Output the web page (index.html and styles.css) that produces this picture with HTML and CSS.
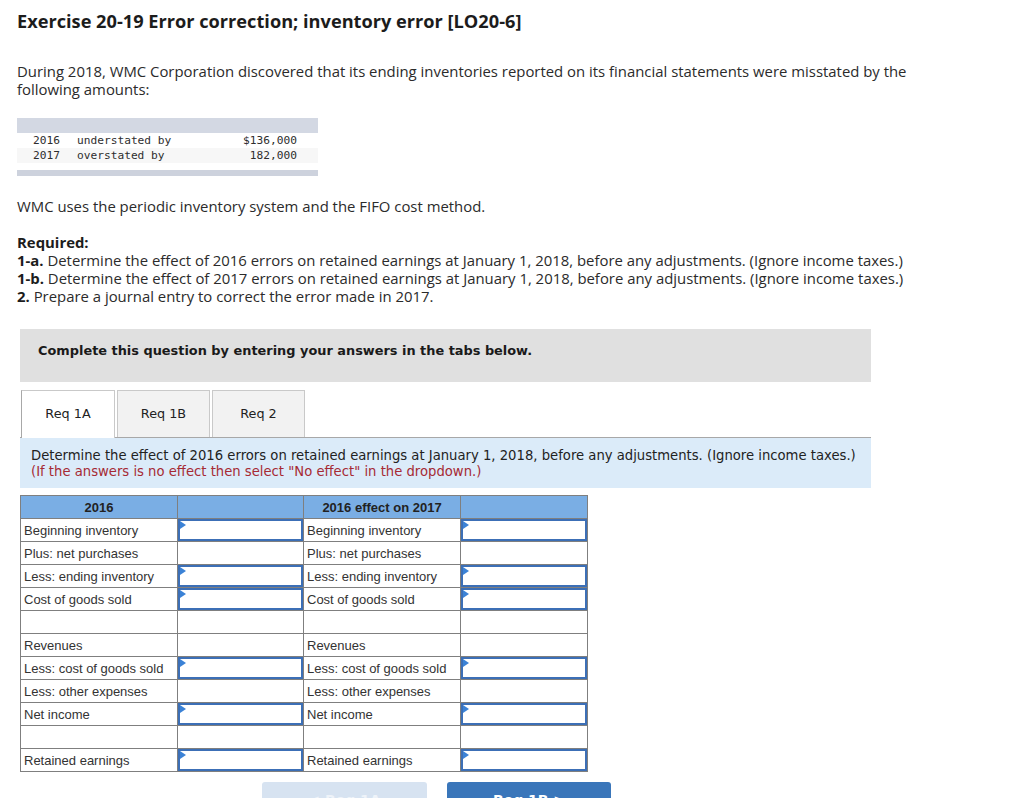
FILE: index.html
```html
<!DOCTYPE html>
<html lang="en">
<head>
<meta charset="utf-8">
<title>Exercise 20-19</title>
<link rel="stylesheet" href="styles.css">
</head>
<body>
<div class="page">
  <h1 class="title">Exercise 20-19 Error correction; inventory error [LO20-6]</h1>

  <p class="text intro">During 2018, WMC Corporation discovered that its ending inventories reported on its financial statements were misstated by the following amounts:</p>

  <div class="data">
    <div class="data-bar"></div>
    <div class="data-row"><span class="yr">2016</span><span class="desc">understated by</span><span class="amt">$136,000</span></div>
    <div class="data-row alt"><span class="yr">2017</span><span class="desc">overstated by</span><span class="amt">182,000</span></div>
    <div class="data-bar bottom"></div>
  </div>

  <p class="text method">WMC uses the periodic inventory system and the FIFO cost method.</p>

  <div class="text required">
    <div><b>Required:</b></div>
    <div><b>1-a.</b> Determine the effect of 2016 errors on retained earnings at January 1, 2018, before any adjustments. (Ignore income taxes.)</div>
    <div><b>1-b.</b> Determine the effect of 2017 errors on retained earnings at January 1, 2018, before any adjustments. (Ignore income taxes.)</div>
    <div><b>2.</b> Prepare a journal entry to correct the error made in 2017.</div>
  </div>

  <div class="panel">
    <div class="notice">Complete this question by entering your answers in the tabs below.</div>

    <div class="tabs">
      <div class="tab active">Req 1A</div>
      <div class="tab">Req 1B</div>
      <div class="tab">Req 2</div>
    </div>

    <div class="info">
      <div>Determine the effect of 2016 errors on retained earnings at January 1, 2018, before any adjustments. (Ignore income taxes.)</div>
      <div class="hint">(If the answers is no effect then select "No effect" in the dropdown.)</div>
    </div>

    <table class="sheet">
      <colgroup>
        <col class="c-label"><col class="c-input"><col class="c-label"><col class="c-input2">
      </colgroup>
      <thead>
        <tr><th>2016</th><th></th><th>2016 effect on 2017</th><th></th></tr>
      </thead>
      <tbody>
        <tr><td>Beginning inventory</td><td class="in"><div class="box"></div></td><td>Beginning inventory</td><td class="in"><div class="box"></div></td></tr>
        <tr><td>Plus: net purchases</td><td></td><td>Plus: net purchases</td><td></td></tr>
        <tr><td>Less: ending inventory</td><td class="in"><div class="box"></div></td><td>Less: ending inventory</td><td class="in"><div class="box"></div></td></tr>
        <tr><td>Cost of goods sold</td><td class="in"><div class="box"></div></td><td>Cost of goods sold</td><td class="in"><div class="box"></div></td></tr>
        <tr><td></td><td></td><td></td><td></td></tr>
        <tr><td>Revenues</td><td></td><td>Revenues</td><td></td></tr>
        <tr><td>Less: cost of goods sold</td><td class="in"><div class="box"></div></td><td>Less: cost of goods sold</td><td class="in"><div class="box"></div></td></tr>
        <tr><td>Less: other expenses</td><td></td><td>Less: other expenses</td><td></td></tr>
        <tr><td>Net income</td><td class="in"><div class="box"></div></td><td>Net income</td><td class="in"><div class="box"></div></td></tr>
        <tr><td></td><td></td><td></td><td></td></tr>
        <tr><td>Retained earnings</td><td class="in"><div class="box"></div></td><td>Retained earnings</td><td class="in"><div class="box"></div></td></tr>
      </tbody>
    </table>

    <div class="nav">
      <div class="btn prev">&lt; Req 1A</div>
      <div class="btn next">Req 1B &gt;</div>
    </div>
  </div>
</div>
</body>
</html>
```

FILE: styles.css
```css
html, body {
  margin: 0;
  padding: 0;
  background: #fff;
  overflow: hidden;
}

.page {
  padding: 10px 17px 0;
  font-family: "Open Sans", Lato, sans-serif;
  color: #2b2b2b;
}

.title {
  margin: 0;
  font-size: 18.2px;
  line-height: 22px;
  font-weight: 700;
  color: #1c1c1c;
}

.text {
  font-size: 14.9px;
  line-height: 18px;
  margin: 0;
}

.intro {
  margin-top: 30px;
  padding-right: 100px;
}

/* small monospace data listing */
.data {
  margin-top: 20px;
  width: 301px;
  font-family: "DejaVu Sans Mono", monospace;
  font-size: 11.2px;
  color: #2e2e2e;
}
.data-bar {
  height: 15px;
  background: #d3d8e3;
}
.data-bar.bottom {
  height: 6px;
  margin-top: 7px;
  background: #cdd2dd;
}
.data-row {
  display: flex;
  height: 15px;
  line-height: 15px;
}
.data-row.alt {
  background: #f7f7f7;
}
.yr {
  width: 44px;
  padding-left: 16px;
}
.desc {
  width: 140px;
}
.amt {
  width: 80px;
  text-align: right;
}

.method {
  margin-top: 21px;
}

.required {
  margin-top: 18px;
}
.required b {
  font-weight: 700;
  color: #1c1c1c;
}

/* answer panel */
.panel {
  margin-top: 24px;
  margin-left: 3px;
  width: 851px;
  font-family: "DejaVu Sans", Verdana, sans-serif;
  color: #222;
}

.notice {
  background: #e0e0e0;
  height: 53px;
  box-sizing: border-box;
  padding: 14px 0 0 18px;
  font-size: 12.9px;
  line-height: 16px;
  font-weight: 700;
  color: #1a1a1a;
}

.tabs {
  display: flex;
  gap: 2px;
  margin-top: 8px;
  padding-left: 2px;
  border-bottom: 1px solid #a8a8a8;
  height: 47px;
}
.tab {
  width: 93px;
  height: 47px;
  box-sizing: border-box;
  border: 1px solid #c9c9c9;
  border-bottom: none;
  background: #f2f2f2;
  font-size: 12.8px;
  line-height: 46px;
  text-align: center;
  color: #222;
}
.tab.active {
  background: #fff;
  height: 48px;
  border-left-color: #a8a8a8;
  margin-left: -1px;
  width: 94px;
}

.info {
  background: #dbebf9;
  padding: 10px 11px 8px;
  font-size: 13.2px;
  line-height: 16px;
  color: #222;
}
.hint {
  color: #a62a34;
}

/* worksheet grid */
.sheet {
  margin-top: 7px;
  border-collapse: collapse;
  table-layout: fixed;
  width: 567px;
  font-family: "Liberation Sans", Arial, sans-serif;
  font-size: 13px;
  color: #333;
}
.c-label { width: 157px; }
.c-input { width: 126px; }
.c-input2 { width: 127px; }

.sheet th, .sheet td {
  border: 1px solid #7f7f7f;
  height: 23px;
  padding: 0 0 0 3px;
  box-sizing: border-box;
  text-align: left;
  white-space: nowrap;
}
.sheet th {
  background: #7aaee4;
  font-weight: 700;
  text-align: center;
  color: #222;
  padding: 0;
}
.sheet td.in {
  padding: 0;
}
.box {
  height: 22px;
  box-sizing: border-box;
  border: 2px solid #3c6fb6;
  position: relative;
}
/* dropdown marker in the corner of an answer box */
.box::before {
  content: "";
  position: absolute;
  left: 0;
  top: 0;
  border-top: 4px solid transparent;
  border-bottom: 4px solid transparent;
  border-left: 6px solid #3b82d6;
}

.nav {
  display: flex;
  gap: 20px;
  margin-top: 10px;
  margin-left: 242px;
}
.btn {
  width: 165px;
  height: 32px;
  border-radius: 3px 3px 0 0;
  box-sizing: border-box;
  padding-top: 9px;
  font-size: 14px;
  line-height: 18px;
  text-align: center;
  font-weight: 700;
}
.btn.prev {
  background: #d7e3f1;
  color: #eef3f9;
}
.btn.next {
  background: #3a76ba;
  color: #fff;
  width: 164px;
}
```
